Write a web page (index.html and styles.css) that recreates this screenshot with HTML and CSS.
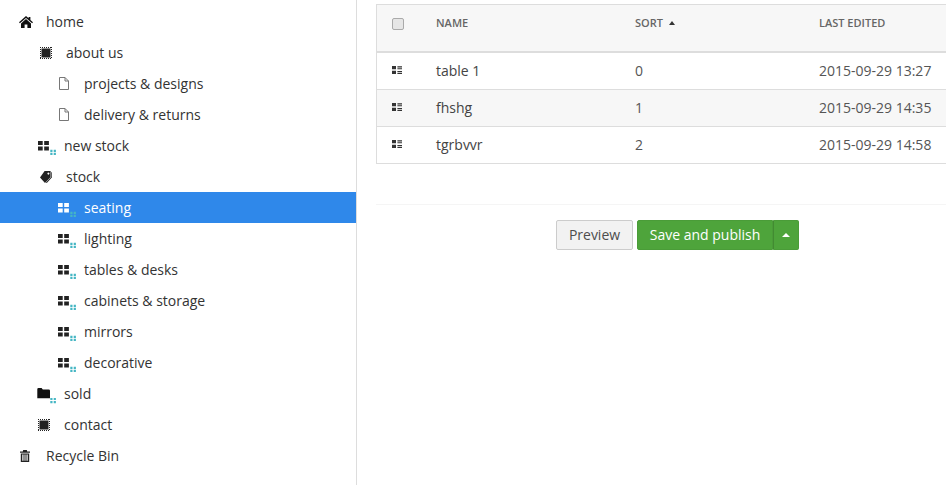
FILE: index.html
```html
<!DOCTYPE html>
<html lang="en">
<head>
<meta charset="utf-8">
<title>Site tree</title>
<link rel="stylesheet" href="styles.css">
</head>
<body>
<svg class="sprites" aria-hidden="true">
  <symbol id="i-home" viewBox="0 0 14 12">
    <path d="M7 0 L9.6 2.3 V1 H11.4 V3.9 L14 6.2 L13.1 7.2 L7 1.9 L.9 7.2 L0 6.2 Z"/>
    <path d="M7 3 L12 7.4 V12 H8.4 V8.6 H5.6 V12 H2 V7.4 Z"/>
  </symbol>
  <symbol id="i-chip" viewBox="0 0 12 12">
    <path d="M1.5 1.5 H10.5 V10.5 H1.5 Z"/>
    <path d="M0 .5 H12 M0 11.5 H12 M.5 0 V12 M11.5 0 V12" fill="none" stroke="currentColor" stroke-width="1" stroke-dasharray="1 1"/>
  </symbol>
  <symbol id="i-page" viewBox="0 0 10 13">
    <path d="M.5 .5 H6 L9.5 4 V12.5 H.5 Z M6 .5 V4 H9.5" fill="none" stroke="currentColor" stroke-width="1"/>
  </symbol>
  <symbol id="i-grid" viewBox="0 0 18 14">
    <path d="M0 0 H4.7 V4 H0 Z M6.2 0 H10.9 V4 H6.2 Z M0 5.5 H4.7 V9.5 H0 Z M6.2 5.5 H10.9 V9.5 H6.2 Z"/>
    <path class="dots" d="M12.3 8.8 H14.5 V10.9 H12.3 Z M15.7 8.8 H17.9 V10.9 H15.7 Z M12.3 11.8 H14.5 V13.9 H12.3 Z M15.7 11.8 H17.9 V13.9 H15.7 Z"/>
  </symbol>
  <symbol id="i-tag" viewBox="0 0 12 12">
    <path d="M4.6 0 H10.6 V6 L5 12 L0 6.6 Z M8.4 1.4 a1 1 0 1 0 .01 0 Z" fill-rule="evenodd"/>
    <path d="M11.3 1 L12 1.4 V6.2 L6.8 12 L5.9 11.4 L11.3 5.8 Z"/>
  </symbol>
  <symbol id="i-folder" viewBox="0 0 19 16">
    <path d="M.3 1.2 Q.3 0 1.5 0 H4.6 L5.8 1.6 H11.8 Q13 1.6 13 2.8 V10.3 H.3 Z"/>
    <path class="dots" d="M13.3 10 H15.5 V12 H13.3 Z M16.7 10 H18.9 V12 H16.7 Z M13.3 13 H15.5 V15.2 H13.3 Z M16.7 13 H18.9 V15.2 H16.7 Z"/>
  </symbol>
  <symbol id="i-trash" viewBox="0 0 10 12">
    <path d="M3.2 0 H6.8 L7.2 1.4 H10 V2.8 H0 V1.4 H2.8 Z"/>
    <path d="M.8 3.4 H9.2 V12 H.8 Z M2.3 4.6 V10.8 H3.5 V4.6 Z M4.5 4.6 V10.8 H5.5 V4.6 Z M6.5 4.6 V10.8 H7.7 V4.6 Z" fill-rule="evenodd"/>
  </symbol>
  <symbol id="i-drag" viewBox="0 0 10 8">
    <path d="M0 0 H4 V3.2 H0 Z M0 4.8 H4 V8 H0 Z M5.4 .2 H10 V1.4 H5.4 Z M5.4 2.2 H10 V3.2 H5.4 Z M5.4 5 H10 V6 H5.4 Z M5.4 6.8 H10 V8 H5.4 Z"/>
  </symbol>
</svg>

<div class="page">
  <nav class="tree">
    <a class="node lvl0"><span class="slot w28"><svg class="ic home"><use href="#i-home"/></svg></span>home</a>
    <a class="node lvl1"><span class="slot w28"><svg class="ic chip"><use href="#i-chip"/></svg></span>about us</a>
    <a class="node lvl2"><span class="slot w26"><svg class="ic page-ic"><use href="#i-page"/></svg></span>projects &amp; designs</a>
    <a class="node lvl2"><span class="slot w26"><svg class="ic page-ic"><use href="#i-page"/></svg></span>delivery &amp; returns</a>
    <a class="node lvl1"><span class="slot w26"><svg class="ic grid"><use href="#i-grid"/></svg></span>new stock</a>
    <a class="node lvl1"><span class="slot w28"><svg class="ic tag"><use href="#i-tag"/></svg></span>stock</a>
    <a class="node lvl2 active"><span class="slot w26"><svg class="ic grid"><use href="#i-grid"/></svg></span>seating</a>
    <a class="node lvl2"><span class="slot w26"><svg class="ic grid"><use href="#i-grid"/></svg></span>lighting</a>
    <a class="node lvl2"><span class="slot w26"><svg class="ic grid"><use href="#i-grid"/></svg></span>tables &amp; desks</a>
    <a class="node lvl2"><span class="slot w26"><svg class="ic grid"><use href="#i-grid"/></svg></span>cabinets &amp; storage</a>
    <a class="node lvl2"><span class="slot w26"><svg class="ic grid"><use href="#i-grid"/></svg></span>mirrors</a>
    <a class="node lvl2"><span class="slot w26"><svg class="ic grid"><use href="#i-grid"/></svg></span>decorative</a>
    <a class="node lvl1"><span class="slot w26"><svg class="ic folder"><use href="#i-folder"/></svg></span>sold</a>
    <a class="node lvl1"><span class="slot w26"><svg class="ic chip chip-alt"><use href="#i-chip"/></svg></span>contact</a>
    <a class="node lvl0"><span class="slot w28"><svg class="ic trash"><use href="#i-trash"/></svg></span>Recycle Bin</a>
  </nav>

  <main class="main">
    <div class="content">
      <table class="grid-table">
        <thead>
          <tr>
            <th class="col-check"><span class="checkbox"></span></th>
            <th class="col-name">Name</th>
            <th class="col-sort">Sort <span class="sort-caret"></span></th>
            <th>Last edited</th>
          </tr>
        </thead>
        <tbody>
          <tr>
            <td class="col-check"><svg class="ic drag"><use href="#i-drag"/></svg></td>
            <td class="cell-name">table 1</td><td>0</td><td>2015-09-29 13:27</td>
          </tr>
          <tr class="alt">
            <td class="col-check"><svg class="ic drag"><use href="#i-drag"/></svg></td>
            <td class="cell-name">fhshg</td><td>1</td><td>2015-09-29 14:35</td>
          </tr>
          <tr>
            <td class="col-check"><svg class="ic drag"><use href="#i-drag"/></svg></td>
            <td class="cell-name">tgrbvvr</td><td>2</td><td>2015-09-29 14:58</td>
          </tr>
        </tbody>
      </table>

      <div class="actions">
        <button class="btn btn-plain" type="button">Preview</button>
        <div class="split">
          <button class="btn btn-primary" type="button">Save and publish</button>
          <button class="btn btn-primary btn-caret" type="button" aria-label="More options"><span class="up-caret"></span></button>
        </div>
      </div>
    </div>
  </main>
</div>
</body>
</html>
```

FILE: styles.css
```css
* { box-sizing: border-box; }

html, body {
  margin: 0;
  height: 100%;
  overflow: hidden;
}

body {
  font-family: "Open Sans", "Liberation Sans", sans-serif;
  font-size: 14px;
  color: #333;
  background: #fff;
}

.sprites { display: none; }

.page {
  display: flex;
  height: 485px;
}

/* Tree */
.tree {
  flex: 0 0 357px;
  padding-top: 6px;
  border-right: 1px solid #ddd;
}

.node {
  display: flex;
  align-items: center;
  height: 31px;
  color: #333;
  white-space: nowrap;
}

.lvl0 { padding-left: 18px; }
.lvl1 { padding-left: 38px; }
.lvl2 { padding-left: 58px; }

.active {
  background: #2f88ea;
  color: #fff;
}

.slot {
  display: flex;
  align-items: center;
  flex: none;
}
.w26 { width: 26px; }
.w28 { width: 28px; }

.ic {
  display: block;
  flex: none;
  fill: currentColor;
}

.dots { fill: #45b6c4; }
.active .dots { fill: #b5e6ee; }

.home { width: 14px; height: 12px; margin-left: 1px; color: #111; }
.chip { width: 12px; height: 12px; margin-left: 2px; color: #222; }
.chip-alt { margin-left: 0; }
.page-ic { width: 10px; height: 13px; margin-left: 1px; color: #777; }
.grid { width: 18px; height: 14px; margin-top: 5px; color: #222; }
.active .grid { color: #fff; }
.tag { width: 12px; height: 12px; margin-left: 2px; color: #222; }
.folder { width: 19px; height: 16px; margin-top: 5px; margin-left: -1px; color: #111; }
.trash { width: 10px; height: 12px; margin-left: 2px; color: #222; }
.drag { width: 10px; height: 8px; margin-left: 15px; color: #333; }

/* Main column */
.main {
  flex: 1;
  min-width: 0;
  overflow: hidden;
  padding: 4px 0 0 19px;
}

.content { width: 603px; }

.grid-table {
  width: 603px;
  table-layout: fixed;
  border-collapse: separate;
  border-spacing: 0;
  border-left: 1px solid #ddd;
  color: #555;
}

.grid-table th {
  height: 49px;
  padding: 9px 0 0;
  vertical-align: top;
  text-align: left;
  font-size: 11px;
  font-weight: 600;
  line-height: 17px;
  text-transform: uppercase;
  color: #666;
  background: #f7f7f7;
  border-top: 1px solid #ddd;
  border-bottom: 2px solid #ddd;
}

.grid-table td {
  height: 37px;
  padding: 0 0 2px;
  border-bottom: 1px solid #ddd;
  vertical-align: middle;
}

.alt td { background: #f7f7f7; }

.col-check { width: 59px; }
.col-name { width: 199px; }
.col-sort { width: 184px; }

.cell-name { color: #444; }

.checkbox {
  display: block;
  width: 12px;
  height: 12px;
  margin: 4px 0 0 15px;
  border: 1px solid #aaa;
  border-radius: 2px;
  background: #e6e6e6;
}

.sort-caret {
  display: inline-block;
  margin: 0 0 2px 3px;
  border-left: 3.5px solid transparent;
  border-right: 3.5px solid transparent;
  border-bottom: 4px solid #333;
}

/* Actions */
.actions {
  display: flex;
  justify-content: center;
  gap: 4px;
  margin-top: 40px;
  padding-top: 15px;
  border-top: 1px solid #f5f5f5;
}

.split { display: flex; }

.btn {
  height: 30px;
  padding: 0;
  font: inherit;
  line-height: 28px;
  white-space: nowrap;
  border-radius: 2px;
  border: 1px solid transparent;
}

.btn-plain {
  width: 77px;
  color: #4d4d4d;
  background: #f2f2f2;
  border-color: #ccc;
}

.btn-primary {
  width: 136px;
  color: #fff;
  background: #4ea43b;
  border-color: #4a9c38;
  border-radius: 2px 0 0 2px;
}

.btn-caret {
  display: flex;
  align-items: center;
  justify-content: center;
  width: 26px;
  border-left-color: #428b32;
  border-radius: 0 2px 2px 0;
}

.up-caret {
  border-left: 4px solid transparent;
  border-right: 4px solid transparent;
  border-bottom: 4px solid #fff;
}
```
